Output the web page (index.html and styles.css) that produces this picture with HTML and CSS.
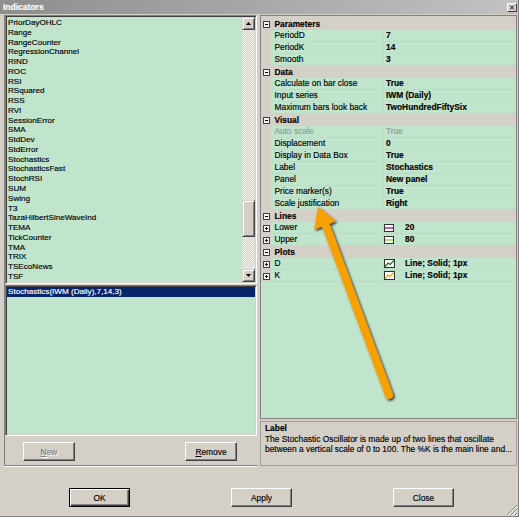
FILE: index.html
```html
<!DOCTYPE html>
<html>
<head>
<meta charset="utf-8">
<link rel="stylesheet" href="styles.css">
</head>
<body>
<div class="window">
  <div class="titlebar">
    <span class="title">Indicators</span>
    <span class="close"><svg width="8" height="7" viewBox="0 0 8 7"><path d="M1.5 1 L6.5 6 M6.5 1 L1.5 6" stroke="#000" stroke-width="1.4"/></svg></span>
  </div>
  <div class="body">
    <div class="left">
      <div class="listbox">
        <div class="items">
          <div>PriorDayOHLC</div><div>Range</div><div>RangeCounter</div><div>RegressionChannel</div><div>RIND</div><div>ROC</div><div>RSI</div><div>RSquared</div><div>RSS</div><div>RVI</div><div>SessionError</div><div>SMA</div><div>StdDev</div><div>StdError</div><div>Stochastics</div><div>StochasticsFast</div><div>StochRSI</div><div>SUM</div><div>Swing</div><div>T3</div><div>TazaHilbertSineWaveInd</div><div>TEMA</div><div>TickCounter</div><div>TMA</div><div>TRIX</div><div>TSEcoNews</div><div>TSF</div>
        </div>
        <div class="vscroll">
          <div class="sbtn"><svg width="7" height="4" viewBox="0 0 7 4"><path d="M3.5 0 L7 4 L0 4Z" fill="#000"/></svg></div>
          <div class="track"><div class="thumb"></div></div>
          <div class="sbtn"><svg width="7" height="4" viewBox="0 0 7 4"><path d="M0 0 L7 0 L3.5 4Z" fill="#000"/></svg></div>
        </div>
      </div>
      <div class="sellist">
        <div class="sel">Stochastics(IWM (Daily),7,14,3)</div>
      </div>
      <div class="leftbtns">
        <button class="btn small disabled"><u>N</u>ew</button>
        <button class="btn small"><u>R</u>emove</button>
      </div>
    </div>
    <div class="right">
      <div class="grid">
        <div class="cat first"><span class="tg"><svg class="ex" viewBox="0 0 7 7"><rect x="0.5" y="0.5" width="6" height="6" fill="#f4f4f4" stroke="#404040"/><path d="M2 3.5H5" stroke="#000"/></svg></span><span class="cn">Parameters</span></div>
        <div class="prop"><span class="tg"></span><span class="pn">PeriodD</span><span class="pv">7</span></div>
        <div class="prop"><span class="tg"></span><span class="pn">PeriodK</span><span class="pv">14</span></div>
        <div class="prop"><span class="tg"></span><span class="pn">Smooth</span><span class="pv">3</span></div>
        <div class="cat"><span class="tg"><svg class="ex" viewBox="0 0 7 7"><rect x="0.5" y="0.5" width="6" height="6" fill="#f4f4f4" stroke="#404040"/><path d="M2 3.5H5" stroke="#000"/></svg></span><span class="cn">Data</span></div>
        <div class="prop"><span class="tg"></span><span class="pn">Calculate on bar close</span><span class="pv">True</span></div>
        <div class="prop"><span class="tg"></span><span class="pn">Input series</span><span class="pv">IWM (Daily)</span></div>
        <div class="prop"><span class="tg"></span><span class="pn">Maximum bars look back</span><span class="pv">TwoHundredFiftySix</span></div>
        <div class="cat"><span class="tg"><svg class="ex" viewBox="0 0 7 7"><rect x="0.5" y="0.5" width="6" height="6" fill="#f4f4f4" stroke="#404040"/><path d="M2 3.5H5" stroke="#000"/></svg></span><span class="cn">Visual</span></div>
        <div class="prop ro"><span class="tg"></span><span class="pn">Auto scale</span><span class="pv">True</span></div>
        <div class="prop"><span class="tg"></span><span class="pn">Displacement</span><span class="pv">0</span></div>
        <div class="prop"><span class="tg"></span><span class="pn">Display in Data Box</span><span class="pv">True</span></div>
        <div class="prop"><span class="tg"></span><span class="pn">Label</span><span class="pv">Stochastics</span></div>
        <div class="prop"><span class="tg"></span><span class="pn">Panel</span><span class="pv">New panel</span></div>
        <div class="prop"><span class="tg"></span><span class="pn">Price marker(s)</span><span class="pv">True</span></div>
        <div class="prop"><span class="tg"></span><span class="pn">Scale justification</span><span class="pv">Right</span></div>
        <div class="cat"><span class="tg"><svg class="ex" viewBox="0 0 7 7"><rect x="0.5" y="0.5" width="6" height="6" fill="#f4f4f4" stroke="#404040"/><path d="M2 3.5H5" stroke="#000"/></svg></span><span class="cn">Lines</span></div>
        <div class="prop"><span class="tg"><svg class="ex" viewBox="0 0 7 7"><rect x="0.5" y="0.5" width="6" height="6" fill="#f4f4f4" stroke="#404040"/><path d="M2 3.5H5M3.5 2V5" stroke="#000"/></svg></span><span class="pn">Lower</span><span class="pv sw"><svg class="swatch" viewBox="0 0 10 8"><rect x="0.5" y="0.5" width="9" height="7" fill="#fff" stroke="#303030"/><path d="M1 4H9" stroke="#9a1ad0" stroke-width="1.4"/></svg>20</span></div>
        <div class="prop"><span class="tg"><svg class="ex" viewBox="0 0 7 7"><rect x="0.5" y="0.5" width="6" height="6" fill="#f4f4f4" stroke="#404040"/><path d="M2 3.5H5M3.5 2V5" stroke="#000"/></svg></span><span class="pn">Upper</span><span class="pv sw"><svg class="swatch" viewBox="0 0 10 8"><rect x="0.5" y="0.5" width="9" height="7" fill="#fff" stroke="#303030"/><path d="M1 4H9" stroke="#9acd32" stroke-width="1.4"/></svg>80</span></div>
        <div class="cat"><span class="tg"><svg class="ex" viewBox="0 0 7 7"><rect x="0.5" y="0.5" width="6" height="6" fill="#f4f4f4" stroke="#404040"/><path d="M2 3.5H5" stroke="#000"/></svg></span><span class="cn">Plots</span></div>
        <div class="prop"><span class="tg"><svg class="ex" viewBox="0 0 7 7"><rect x="0.5" y="0.5" width="6" height="6" fill="#f4f4f4" stroke="#404040"/><path d="M2 3.5H5M3.5 2V5" stroke="#000"/></svg></span><span class="pn">D</span><span class="pv sw"><svg class="swatch pl" viewBox="0 0 11 9"><rect x="0.5" y="0.5" width="10" height="8" fill="#fff" stroke="#303030"/><path d="M1 7.5L4 4L6 5.5L10 1.5" fill="none" stroke="#008000" stroke-width="1.2"/></svg>Line; Solid; 1px</span></div>
        <div class="prop"><span class="tg"><svg class="ex" viewBox="0 0 7 7"><rect x="0.5" y="0.5" width="6" height="6" fill="#f4f4f4" stroke="#404040"/><path d="M2 3.5H5M3.5 2V5" stroke="#000"/></svg></span><span class="pn">K</span><span class="pv sw"><svg class="swatch pl" viewBox="0 0 11 9"><rect x="0.5" y="0.5" width="10" height="8" fill="#fff" stroke="#303030"/><path d="M1 7.5L4 4L6 5.5L10 1.5" fill="none" stroke="#ffa500" stroke-width="1.2"/></svg>Line; Solid; 1px</span></div>
      </div>
      <div class="desc">
        <div class="dtitle">Label</div>
        <div class="dline">The Stochastic Oscillator is made up of two lines that oscillate</div>
        <div class="dline">between a vertical scale of 0 to 100. The %K is the main line and...</div>
      </div>
    </div>
  </div>
  <div class="footer">
    <button class="btn big default">OK</button>
    <button class="btn big">Apply</button>
    <button class="btn big">Close</button>
  </div>
  <svg class="arrow" width="519" height="517" viewBox="0 0 519 517">
    <defs>
      <filter id="sh" x="-20%" y="-20%" width="140%" height="140%">
        <feDropShadow dx="1.5" dy="1.5" stdDeviation="1.2" flood-color="#000" flood-opacity="0.8"/>
      </filter>
    </defs>
    <g filter="url(#sh)">
      <path d="M389 395 L325 223" stroke="#f7a000" stroke-width="8" stroke-linecap="round"/>
      <path d="M318.5 208 L334.5 221 L315 228.5 Z" fill="#f7a000" stroke="#f7a000" stroke-width="1.5" stroke-linejoin="round"/>
    </g>
  </svg>
  <svg class="grip" width="12" height="12" viewBox="0 0 12 12">
    <path d="M11 1L1 11M11 5L5 11M11 9L9 11" stroke="#808080" stroke-width="1"/>
    <path d="M11 2L2 11M11 6L6 11M11 10L10 11" stroke="#fff" stroke-width="1"/>
  </svg>
</div>
</body>
</html>
```

FILE: styles.css
```css
* { box-sizing: border-box; margin: 0; padding: 0; }
body { margin: 0; background: #d4d0c8; font-family: "Liberation Sans", Arial, sans-serif; }

.window {
  position: relative;
  width: 519px;
  height: 517px;
  background: #d4d0c8;
  border-right: 1px solid #808080;
  border-bottom: 1px solid #808080;
  overflow: hidden;
  -webkit-text-stroke: 0.15px currentColor;
}

.titlebar {
  height: 14px;
  background: linear-gradient(to right, #8e8e8e, #c2c2c2);
  display: flex;
  align-items: flex-start;
  justify-content: space-between;
  padding: 0 1px 0 3px;
}
.title { color: #fff; font-weight: bold; font-size: 8.5px; line-height: 14px; }
.close {
  margin-top: 3px;
  width: 10px;
  height: 9px;
  background: #d4d0c8;
  border: 1px solid;
  border-color: #fff #404040 #404040 #fff;
  display: flex;
  align-items: center;
  justify-content: center;
}
.close svg { display: block; width: 6px; height: 5px; }

.body {
  display: flex;
  gap: 2px;
  height: 452px;
  padding: 1px 1px 0 4px;
}

.left {
  width: 254px;
  display: flex;
  flex-direction: column;
  border-left: 1px solid #808080;
  border-bottom: 1px solid #808080;
  box-shadow: 0 1px 0 #fff;
}

.listbox {
  height: 269px;
  margin-right: 1px;
  display: flex;
  border: 1px solid;
  border-color: #808080 #fff #fff #808080;
  box-shadow: inset 1px 1px 0 #404040, inset -1px -1px 0 #d4d0c8;
  padding: 1px;
  background: #c1e4cd;
}
.items {
  flex: 1;
  padding: 1px 0 0 1px;
  font-size: 8.1px;
  line-height: 9.77px;
  color: #000;
  white-space: nowrap;
  overflow: hidden;
}
.vscroll {
  width: 13px;
  display: flex;
  flex-direction: column;
}
.sbtn {
  height: 13px;
  background: #d4d0c8;
  border: 1px solid;
  border-color: #d4d0c8 #404040 #404040 #d4d0c8;
  box-shadow: inset 1px 1px 0 #fff, inset -1px -1px 0 #808080;
  display: flex;
  align-items: center;
  justify-content: center;
}
.sbtn svg { display: block; width: 5px; height: 3px; }
.track {
  flex: 1;
  background: repeating-conic-gradient(#d4d0c8 0 25%, #f2f1ec 0 50%) 0 0 / 2px 2px;
  padding-top: 170px;
}
.thumb {
  height: 37px;
  background: #d4d0c8;
  border: 1px solid;
  border-color: #d4d0c8 #404040 #404040 #d4d0c8;
  box-shadow: inset 1px 1px 0 #fff, inset -1px -1px 0 #808080;
}

.sellist {
  height: 151px;
  margin: 1px 1px 0 0;
  border: 1px solid;
  border-color: #808080 #fff #fff #808080;
  box-shadow: inset 1px 1px 0 #404040, inset -1px -1px 0 #d4d0c8;
  padding: 1px;
  background: #c1e4cd;
}
.sel {
  background: #0a246a;
  color: #fff;
  font-size: 8.1px;
  line-height: 10px;
  padding-left: 1px;
  white-space: nowrap;
}

.leftbtns {
  flex: 1;
  display: flex;
  padding: 6px 0 0 18px;
  gap: 110px;
}

.btn {
  font-family: "Liberation Sans", Arial, sans-serif;
  font-size: 8.4px;
  color: #000;
  height: 19px;
  background: #d4d0c8;
  border: 1px solid;
  border-color: #fff #404040 #404040 #fff;
  box-shadow: inset -1px -1px 0 #808080;
  display: flex;
  align-items: center;
  justify-content: center;
}
.btn u { text-decoration: underline; }
.btn.small { width: 52px; }
.btn.disabled { color: #808080; text-shadow: 1px 1px 0 #fff; }
.btn.big { width: 61px; }
.btn.default {
  border: 1px solid #000;
  box-shadow: inset 1px 1px 0 #fff, inset -1px -1px 0 #404040, inset -2px -2px 0 #808080;
}

.right {
  width: 257px;
  display: flex;
  flex-direction: column;
}

.grid {
  height: 404px;
  border: 1px solid #808080;
  background: #c1e4cd;
  font-size: 8.4px;
  color: #000;
}
.cat {
  height: 12px;
  display: flex;
  background: #d4d0c8;
  line-height: 12px;
}
.cat.first { height: 14px; padding-top: 2px; }
.tg {
  width: 10px;
  flex: none;
  background: #d4d0c8;
  display: flex;
  align-items: center;
  justify-content: center;
}
.ex { display: block; width: 7px; height: 7px; }
.cn { font-weight: bold; padding-left: 3.5px; }
.prop {
  height: 12px;
  display: grid;
  grid-template-columns: 10px 113px 1fr;
  line-height: 11px;
}
.pn {
  padding-left: 3.5px;
  border-right: 1px solid #d4d0c8;
  border-bottom: 1px solid #d4d0c8;
  white-space: nowrap;
  overflow: hidden;
}
.pv {
  padding-left: 2px;
  font-weight: bold;
  border-bottom: 1px solid #d4d0c8;
  white-space: nowrap;
  overflow: hidden;
}
.ro .pn, .ro .pv { color: #8f9a93; font-weight: normal; }
.pv.sw { display: flex; align-items: center; padding-left: 0; }
.swatch { display: block; width: 10px; height: 8px; margin-right: 11px; flex: none; }
.swatch.pl { width: 11px; height: 9px; margin-right: 10px; }

.desc {
  margin-top: 2px;
  height: 45px;
  border: 1px solid #a0a0a0;
  padding: 1px 0 0 4px;
  font-size: 8.4px;
  color: #000;
  white-space: nowrap;
  overflow: hidden;
}
.dtitle { font-weight: bold; line-height: 11px; }
.dline { line-height: 10px; }

.footer {
  height: 50px;
  display: flex;
  padding: 22px 0 0 69px;
  gap: 101px;
}

.arrow { position: absolute; left: 0; top: 0; pointer-events: none; }
.grip { position: absolute; right: 0; bottom: 0; }
```
